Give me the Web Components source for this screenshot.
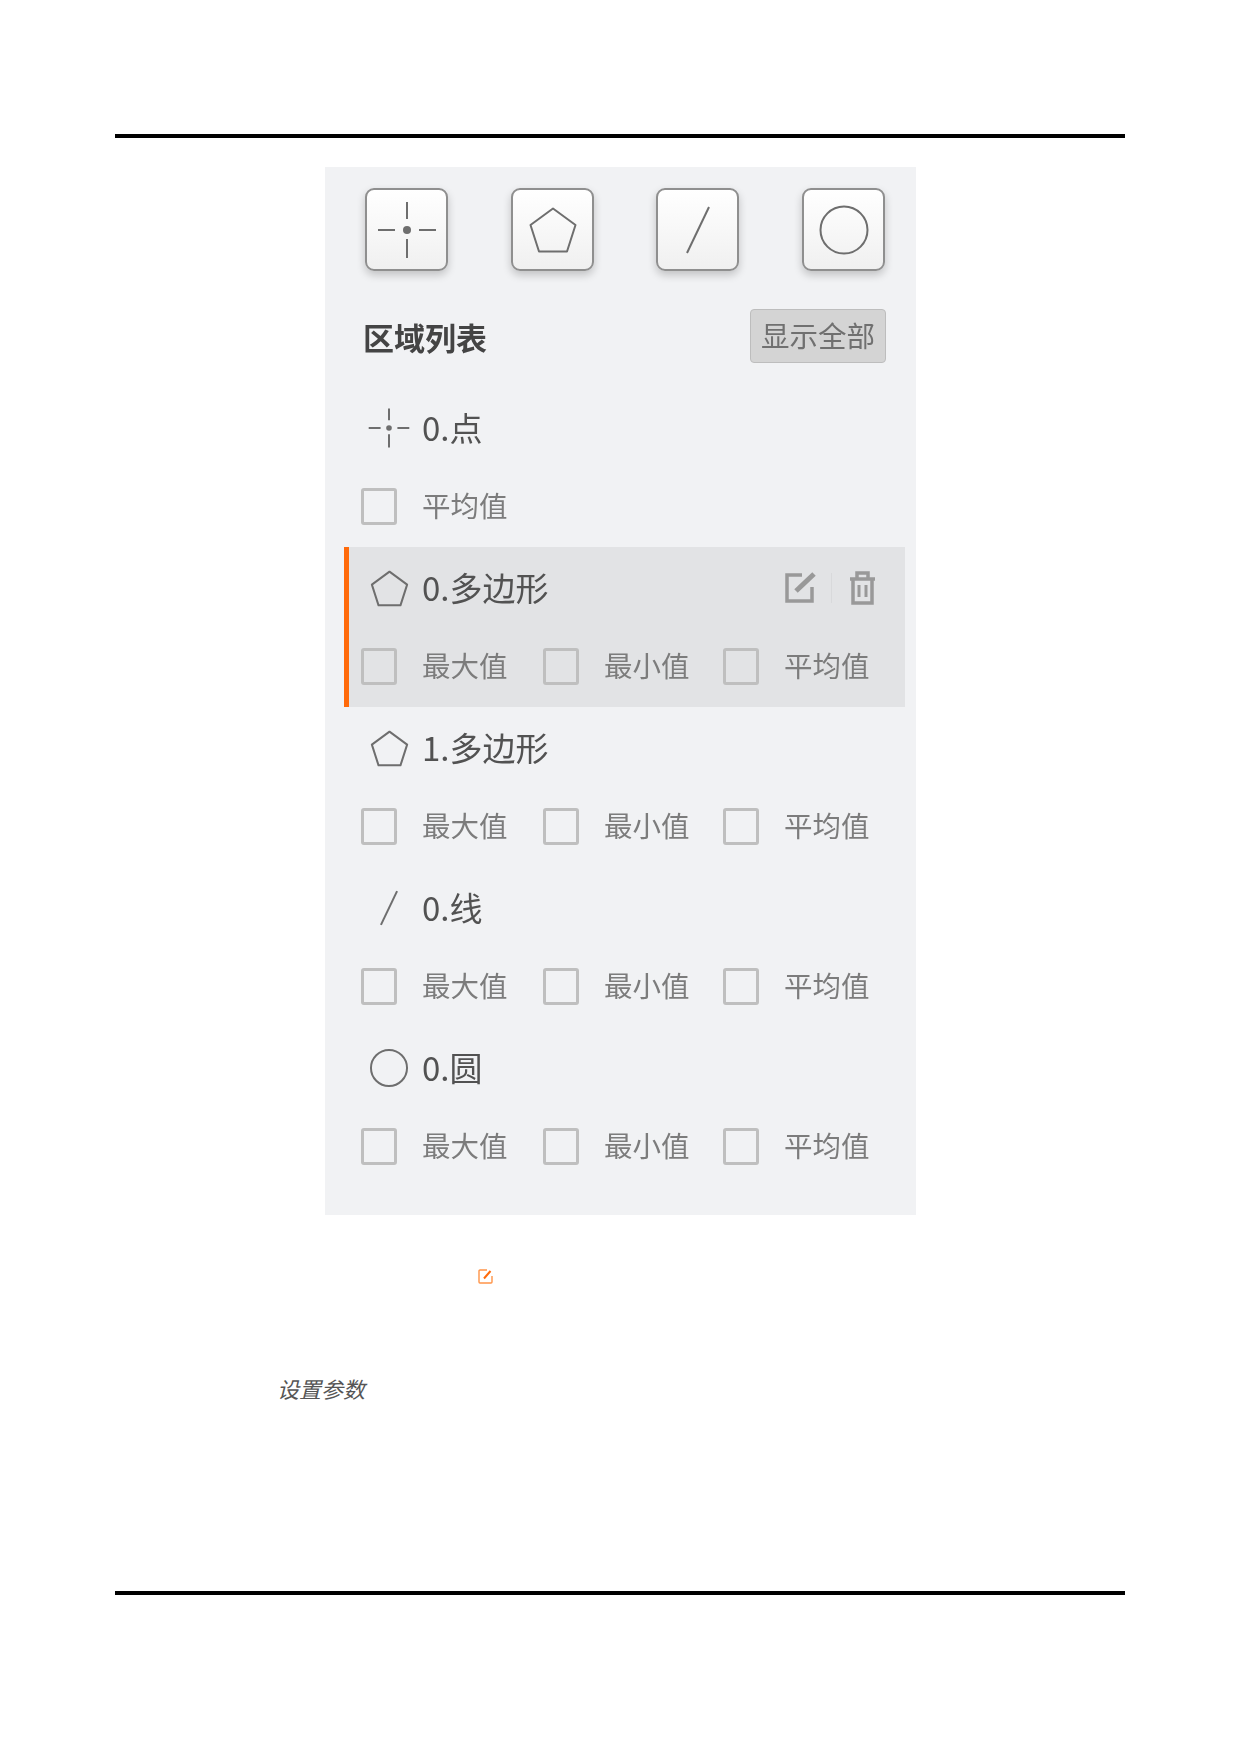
<!DOCTYPE html>
<html lang="zh-CN">
<head>
<meta charset="UTF-8">
<title>区域列表</title>
<style>
    html, body { margin: 0; background: #fff; }
    body { font-family: "Noto Sans CJK SC", "Noto Sans", sans-serif; }
    region-item shape-icon { --shape-size: 44px; }
    region-item shape-icon[shape="polygon"] { --shape-size: 47px; }
    region-item shape-icon[shape="circle"] { --shape-size: 46px; }
    region-item shape-icon[shape="point"] { --shape-size: 42px; }
</style>
</head>
<body>
<template id="shape-tmpl">
    <style>
        :host { display: inline-flex; align-items: center; justify-content: center; color: #6e6e6e; }
        svg { display: block; width: var(--shape-size, 60px); height: var(--shape-size, 60px); overflow: visible; }
        * { vector-effect: non-scaling-stroke; }
    </style>
    <svg viewBox="0 0 60 60" fill="none" stroke="currentColor" stroke-width="2"></svg>
</template>

<script>
    const SHAPES = {
        point: '<path d="M1 30H18M42 30H59M30 2V19M30 39V58"/><circle cx="30" cy="30" r="4" fill="currentColor" stroke="none"/>',
        polygon: '<path d="M30 8.5L52.5 25L44 51.5H16L7.5 25Z" stroke-linejoin="round"/>',
        line: '<path d="M41 7L19 53"/>',
        circle: '<circle cx="30" cy="30" r="23.5"/>'
    };

    customElements.define('shape-icon', class extends HTMLElement {
        connectedCallback() {
            const root = this.attachShadow({ mode: 'open' });
            root.append(document.getElementById('shape-tmpl').content.cloneNode(true));
            root.querySelector('svg').innerHTML = SHAPES[this.getAttribute('shape')];
        }
    });

    customElements.define('page-rule', class extends HTMLElement {
        connectedCallback() {
            this.attachShadow({ mode: 'open' }).innerHTML = '<style>:host { display: block; height: 4px; background: #000; }</style>';
        }
    });

    customElements.define('tool-button', class extends HTMLElement {
        connectedCallback() {
            this.attachShadow({ mode: 'open' }).innerHTML = `
                <style>
                    :host {
                        display: flex; align-items: center; justify-content: center;
                        box-sizing: border-box; width: 83px; height: 83px;
                        border: 2px solid #8f8f8f; border-radius: 9px;
                        background: linear-gradient(#fff, #f0f0f0);
                        box-shadow: 0 4px 9px rgba(0, 0, 0, .2);
                    }
                </style>
                <slot></slot>`;
        }
    });

    customElements.define('region-check', class extends HTMLElement {
        connectedCallback() {
            this.attachShadow({ mode: 'open' }).innerHTML = `
                <style>
                    :host { display: flex; align-items: center; gap: 25px; color: #7c7c7c; font-size: 28.5px; line-height: 40px; white-space: nowrap; }
                    i { box-sizing: border-box; width: 36px; height: 37px; border: 3.5px solid #bfbfbf; border-radius: 3px; }
                    span { position: relative; top: -1px; }
                </style>
                <i></i><span><slot></slot></span>`;
        }
    });

    customElements.define('region-item', class extends HTMLElement {
        connectedCallback() {
            this.attachShadow({ mode: 'open' }).innerHTML = `
                <style>
                    :host { display: block; box-sizing: border-box; height: 160px; border-left: 5px solid transparent; }
                    :host([active]) { background: #e2e3e5; border-left-color: #ff6a0a; }
                    .head { display: flex; align-items: center; height: 84px; padding: 0 29px 0 12px; color: #525252; font-size: 33px; }
                    .icon { display: flex; justify-content: center; width: 54px; margin: 0 6px 2px 1px; color: #8c8c8c; }
                    .name { flex: 1; white-space: nowrap; line-height: 40px; margin-bottom: 5px; }
                    .checks { display: grid; grid-template-columns: 182px 180px 1fr; align-items: center; height: 70px; padding-left: 12px; }
                </style>
                <div class="head">
                    <span class="icon"><slot name="icon"></slot></span>
                    <span class="name"><slot name="name"></slot></span>
                    <slot name="actions"></slot>
                </div>
                <div class="checks"><slot></slot></div>`;
        }
    });

    customElements.define('item-actions', class extends HTMLElement {
        connectedCallback() {
            this.attachShadow({ mode: 'open' }).innerHTML = `
                <style>
                    :host { display: flex; align-items: center; color: #999; margin-bottom: 2px; }
                    svg { display: block; fill: none; stroke: currentColor; stroke-width: 3.5; }
                    b { width: 1px; height: 30px; margin: 0 17px 0 15px; background: #d8d9db; }
                </style>
                <svg width="32" height="32" viewBox="0 0 32 32"><path d="M18 3H3V29H28V15"/><path d="M12 19L30 2" stroke-width="5"/></svg>
                <b></b>
                <svg width="27" height="34" viewBox="0 0 27 34"><path d="M1 8H26M8 7V2H19V7M4 8V32H23V8" /><path d="M10 14V26M17 14V26" stroke-width="3"/></svg>`;
        }
    });

    customElements.define('region-panel', class extends HTMLElement {
        connectedCallback() {
            this.attachShadow({ mode: 'open' }).innerHTML = `
                <style>
                    :host { display: block; width: 591px; height: 1048px; box-sizing: border-box; padding-top: 21px; background: #f1f2f4; }
                    .inner { filter: blur(.6px); }
                    .tools { display: grid; grid-template-columns: 146px 145px 146px 83px; padding-left: 40px; color: #666; --shape-size: 60px; }
                    .title { display: flex; justify-content: space-between; align-items: flex-start; margin-top: 38px; padding: 0 30px 0 38px; }
                    h2 { margin: 6px 0 0; color: #444; font-size: 31px; line-height: 44px; font-weight: 700; }
                    button {
                        box-sizing: border-box; width: 136px; height: 54px; padding: 0 0 3px;
                        border: 1px solid #bdbdbd; border-radius: 4px; background: #d4d4d4;
                        color: #707070; font: 28.5px/50px "Noto Sans CJK SC", sans-serif;
                    }
                    .list { margin: 24px 11px 0 19px; }
                </style>
                <div class="inner">
                    <div class="tools"><slot name="tools"></slot></div>
                    <div class="title"><h2>区域列表</h2><button>显示全部</button></div>
                    <div class="list"><slot></slot></div>
                </div>`;
        }
    });

    customElements.define('doc-page', class extends HTMLElement {
        connectedCallback() {
            this.attachShadow({ mode: 'open' }).innerHTML = `
                <style>
                    :host { display: block; box-sizing: border-box; height: 1755px; padding: 134px 116px 0 115px; }
                    .figure { margin: 29px 0 0 210px; }
                    .mark { display: block; margin: 54px 0 0 363px; }
                    .caption { margin: 89px 0 188px 162px; color: #555; font-size: 22px; line-height: 30px; font-style: italic; }
                </style>
                <page-rule></page-rule>
                <div class="figure"><slot></slot></div>
                <svg class="mark" width="15" height="15" viewBox="0 0 15 15" fill="none">
                    <path d="M9 1H2a1 1 0 0 0-1 1V13a1 1 0 0 0 1 1H13a1 1 0 0 0 1-1V7" stroke="#ff9448" stroke-width="1.4"/>
                    <path d="M6 9.5L12.5 2" stroke="#ff6a0a" stroke-width="2"/>
                </svg>
                <div class="caption">设置参数</div>
                <page-rule></page-rule>`;
        }
    });
</script>

<doc-page>
    <region-panel>
        <tool-button slot="tools"><shape-icon shape="point"></shape-icon></tool-button>
        <tool-button slot="tools"><shape-icon shape="polygon"></shape-icon></tool-button>
        <tool-button slot="tools"><shape-icon shape="line"></shape-icon></tool-button>
        <tool-button slot="tools"><shape-icon shape="circle"></shape-icon></tool-button>

        <region-item>
            <shape-icon slot="icon" shape="point"></shape-icon>
            <span slot="name">0.点</span>
            <region-check>平均值</region-check>
        </region-item>
        <region-item active>
            <shape-icon slot="icon" shape="polygon"></shape-icon>
            <span slot="name">0.多边形</span>
            <item-actions slot="actions"></item-actions>
            <region-check>最大值</region-check>
            <region-check>最小值</region-check>
            <region-check>平均值</region-check>
        </region-item>
        <region-item>
            <shape-icon slot="icon" shape="polygon"></shape-icon>
            <span slot="name">1.多边形</span>
            <region-check>最大值</region-check>
            <region-check>最小值</region-check>
            <region-check>平均值</region-check>
        </region-item>
        <region-item>
            <shape-icon slot="icon" shape="line"></shape-icon>
            <span slot="name">0.线</span>
            <region-check>最大值</region-check>
            <region-check>最小值</region-check>
            <region-check>平均值</region-check>
        </region-item>
        <region-item>
            <shape-icon slot="icon" shape="circle"></shape-icon>
            <span slot="name">0.圆</span>
            <region-check>最大值</region-check>
            <region-check>最小值</region-check>
            <region-check>平均值</region-check>
        </region-item>
    </region-panel>
</doc-page>
</body>
</html>
